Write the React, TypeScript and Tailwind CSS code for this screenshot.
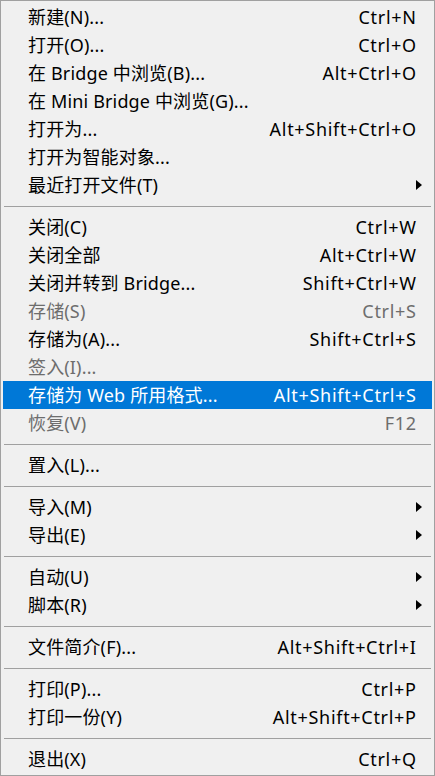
import React from "react";

type Item =
  | { sep: true }
  | { label: string; shortcut?: string; sub?: boolean; disabled?: boolean; active?: boolean };

const items: Item[] = [
  { label: "新建(N)...", shortcut: "Ctrl+N" },
  { label: "打开(O)...", shortcut: "Ctrl+O" },
  { label: "在 Bridge 中浏览(B)...", shortcut: "Alt+Ctrl+O" },
  { label: "在 Mini Bridge 中浏览(G)..." },
  { label: "打开为...", shortcut: "Alt+Shift+Ctrl+O" },
  { label: "打开为智能对象..." },
  { label: "最近打开文件(T)", sub: true },
  { sep: true },
  { label: "关闭(C)", shortcut: "Ctrl+W" },
  { label: "关闭全部", shortcut: "Alt+Ctrl+W" },
  { label: "关闭并转到 Bridge...", shortcut: "Shift+Ctrl+W" },
  { label: "存储(S)", shortcut: "Ctrl+S", disabled: true },
  { label: "存储为(A)...", shortcut: "Shift+Ctrl+S" },
  { label: "签入(I)...", disabled: true },
  { label: "存储为 Web 所用格式...", shortcut: "Alt+Shift+Ctrl+S", active: true },
  { label: "恢复(V)", shortcut: "F12", disabled: true },
  { sep: true },
  { label: "置入(L)..." },
  { sep: true },
  { label: "导入(M)", sub: true },
  { label: "导出(E)", sub: true },
  { sep: true },
  { label: "自动(U)", sub: true },
  { label: "脚本(R)", sub: true },
  { sep: true },
  { label: "文件简介(F)...", shortcut: "Alt+Shift+Ctrl+I" },
  { sep: true },
  { label: "打印(P)...", shortcut: "Ctrl+P" },
  { label: "打印一份(Y)", shortcut: "Alt+Shift+Ctrl+P" },
  { sep: true },
  { label: "退出(X)", shortcut: "Ctrl+Q" },
];

function Arrow() {
  return (
    <svg width="6" height="10" viewBox="0 0 6 10" className="block">
      <path d="M0 0 L6 5 L0 10 Z" fill="#000" />
    </svg>
  );
}

export default function App() {
  return (
    <div
      className="w-[435px] h-[776px] bg-[#f0f0f0] border border-[#a0a0a0] px-[2px] py-[2px] flex flex-col text-[18px] text-black"
      style={{ fontFamily: '"Noto Sans", "Noto Sans CJK SC", sans-serif' }}
    >
      {items.map((it, i) =>
        "sep" in it ? (
          <div key={i} className="h-[14px] flex flex-col justify-center px-[1px]">
            <div className="h-px bg-[#a0a0a0]" />
          </div>
        ) : (
          <div
            key={i}
            className={
              "h-[28px] flex items-center pl-[25px] pr-[16px] " +
              (it.active ? "bg-[#0078d7] text-white " : "") +
              (it.disabled ? "text-[#6d6d6d] " : "")
            }
          >
            <span className="flex-1 whitespace-nowrap leading-none tracking-[0.15px]">{it.label}</span>
            {it.shortcut && (
              <span className="whitespace-nowrap leading-none tracking-[0.7px] mr-[-0.7px]">{it.shortcut}</span>
            )}
            {it.sub && (
              <span className="mr-[-6px]">
                <Arrow />
              </span>
            )}
          </div>
        )
      )}
    </div>
  );
}
